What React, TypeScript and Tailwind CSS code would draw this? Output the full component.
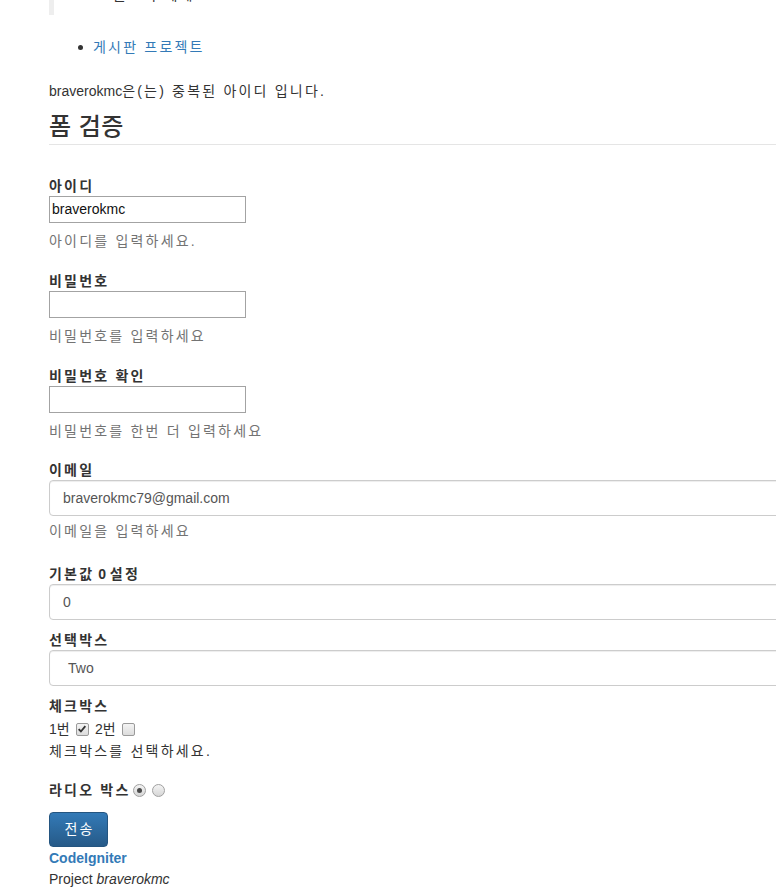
const font = "font-['Liberation_Sans','Noto_Sans_CJK_KR',sans-serif]";

// Hangul in the reference is set wider than Noto Sans CJK, so Korean runs get extra tracking
const K = ({ children }: { children: string }) => <span className="tracking-[2.2px]">{children}</span>;

const Help = ({ children, className = "" }: { children: string; className?: string }) => (
  <p className={`h-[20px] leading-[20px] text-[#737373] ${className}`}>
    <K>{children}</K>
  </p>
);

const Label = ({ children, className = "" }: { children: React.ReactNode; className?: string }) => (
  <label className={`block h-[20px] font-bold leading-[20px] ${className}`}>{children}</label>
);

const Box = ({ checked }: { checked?: boolean }) => (
  <span className="ml-[4px] mr-[6px] inline-flex h-[13px] w-[13px] items-center justify-center rounded-[2px] border border-[#9a9a9a] bg-gradient-to-b from-[#f4f4f4] to-[#dcdcdc]">
    {checked ? (
      <svg viewBox="0 0 12 12" className="h-[10px] w-[10px]">
        <path d="M2 6.2 L4.7 9 L10 2.6" fill="none" stroke="#333" strokeWidth="2.2" />
      </svg>
    ) : null}
  </span>
);

const Radio = ({ checked, className = "" }: { checked?: boolean; className?: string }) => (
  <span
    className={`inline-flex h-[13px] w-[13px] items-center justify-center rounded-full border border-[#a0a0a0] bg-gradient-to-b from-[#f4f4f4] to-[#d6d6d6] ${className}`}
  >
    {checked ? <span className="h-[5px] w-[5px] rounded-full bg-[#4a4a4a]" /> : null}
  </span>
);

const Plain = ({ value }: { value?: string }) => (
  <div className="flex h-[27px] w-[197px] items-center border border-[#a3a3a3] bg-white px-[2px] text-[#111]">
    {value}
  </div>
);

const Control = ({ value, select }: { value: string; select?: boolean }) => (
  <div
    className={`flex h-[36px] w-[900px] items-center rounded-[4px] border border-[#ccc] bg-white shadow-[inset_0_1px_1px_rgba(0,0,0,0.075)] ${select ? "pl-[18px]" : "pl-[13px]"} text-[#555]`}
  >
    {value}
  </div>
);

export default function App() {
  return (
    <div className={`w-full overflow-hidden bg-white text-[14px] text-[#333] ${font}`}>
      <div className="pl-[49px]">
        <blockquote className="h-[15px] overflow-hidden border-l-[5px] border-[#eee]">
          <div className="-mt-[15px] pl-[43px] leading-[20px] text-[#333]">
            <K>– 글쓰기 예제</K>
          </div>
        </blockquote>

        <ul className="mt-[22px] leading-[20px]">
          <li className="flex h-[20px] items-center">
            <span className="ml-[29px] mr-[10px] h-[5px] w-[5px] rounded-full bg-[#333]" />
            <a className="text-[#337ab7]">
              <K>게시판 프로젝트</K>
            </a>
          </li>
        </ul>

        <p className="mt-[24px] leading-[20px]">
          braverokmc<K>은(는) 중복된 아이디 입니다.</K>
        </p>

        <h3 className="mt-[13px] border-b border-[#e5e5e5] pb-[4px] text-[24px] font-medium leading-[26px] tracking-[0.5px]">
          폼 검증
        </h3>

        <form className="pt-[31px]">
          <Label>
            <K>아이디</K>
          </Label>
          <Plain value="braverokmc" />
          <Help className="mt-[8px]">아이디를 입력하세요.</Help>

          <Label className="mt-[20px]">
            <K>비밀번호</K>
          </Label>
          <Plain />
          <Help className="mt-[8px]">비밀번호를 입력하세요</Help>

          <Label className="mt-[20px]">
            <K>비밀번호 확인</K>
          </Label>
          <Plain />
          <Help className="mt-[8px]">비밀번호를 한번 더 입력하세요</Help>

          <Label className="mt-[19px]">
            <K>이메일</K>
          </Label>
          <Control value="braverokmc79@gmail.com" />
          <Help className="mt-[5px]">이메일을 입력하세요</Help>

          <Label className="mt-[23px]">
            <K>기본값</K> 0 <K>설정</K>
          </Label>
          <Control value="0" />

          <Label className="mt-[10px]">
            <K>선택박스</K>
          </Label>
          <Control value="Two" select />

          <Label className="mt-[10px]">
            <K>체크박스</K>
          </Label>
          <div className="mt-[3px] flex h-[20px] items-center leading-[20px]">
            1<K>번</K>
            <Box checked />
            2<K>번</K>
            <Box />
          </div>
          <p className="mt-[2px] leading-[20px]">
            <K>체크박스를 선택하세요.</K>
          </p>

          <div className="mt-[19px] flex h-[20px] items-center font-bold leading-[20px]">
            <K>라디오 박스</K>
            <Radio checked className="ml-[2px]" />
            <Radio className="ml-[6px]" />
          </div>

          <button
            type="button"
            className="mt-[12px] flex h-[35px] w-[59px] items-center justify-center rounded-[4px] border border-[#245580] bg-gradient-to-b from-[#337ab7] to-[#265a88] pl-[2px] text-white"
          >
            <K>전송</K>
          </button>
        </form>

        <p className="mt-[1px] font-bold leading-[20px] text-[#337ab7]">CodeIgniter</p>
        <p className="mt-[1px] leading-[20px]">
          Project <em>braverokmc</em>
        </p>
      </div>
    </div>
  );
}
